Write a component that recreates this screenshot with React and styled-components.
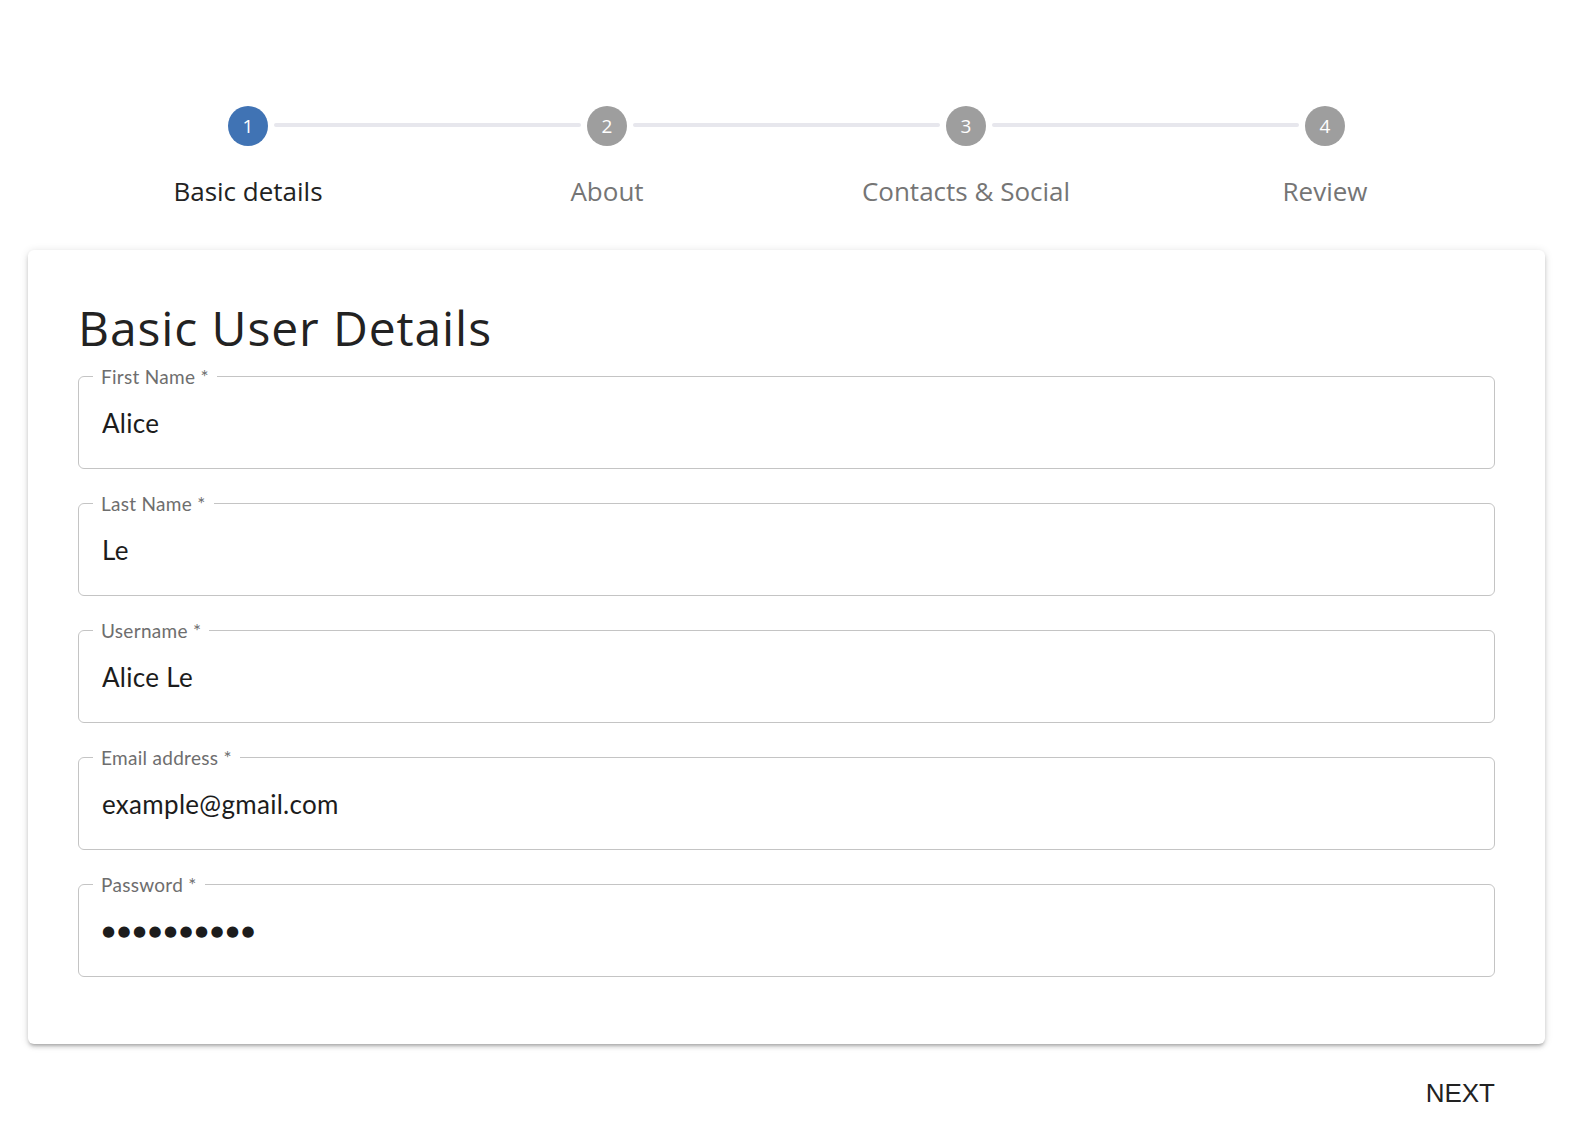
import React from "react";
import styled, { createGlobalStyle } from "styled-components";

const GlobalStyle = createGlobalStyle`
  html, body { margin: 0; padding: 0; background: #fff; }
  body { font-family: "Lato", "Open Sans", sans-serif; color: #222; }
  * { box-sizing: border-box; }
`;

const Page = styled.div`
  padding: 106px 35px 0 28px;
  display: flex;
  flex-direction: column;
`;

const Stepper = styled.div`
  margin: 0 40.5px;
  display: flex;
  flex-direction: column;
`;

const CircleRow = styled.div`
  display: flex;
  align-items: center;
  padding: 0 159.5px;
`;

const Circle = styled.div`
  flex: none;
  width: 40px;
  height: 40px;
  border-radius: 50%;
  background: ${(p) => (p.$active ? "#4073b4" : "#9e9e9e")};
  color: #fff;
  font-family: "Open Sans", sans-serif;
  font-size: 19px;
  display: flex;
  align-items: center;
  justify-content: center;
`;

const Connector = styled.div`
  flex: 1;
  height: 4px;
  margin: -3px 6px 0;
  background: #e7e7ed;
  border-radius: 2px;
`;

const LabelRow = styled.div`
  display: grid;
  grid-template-columns: repeat(4, 1fr);
  margin-top: 27px;
`;

const StepLabel = styled.div`
  text-align: center;
  font-family: "Open Sans", sans-serif;
  font-size: 26px;
  line-height: 36px;
  color: ${(p) => (p.$active ? "#222" : "#757575")};
`;

const Card = styled.div`
  margin-top: 41px;
  background: #fff;
  border-radius: 6px;
  padding: 49px 50px 67px;
  box-shadow: 0 3px 3px -2px rgba(0, 0, 0, 0.2), 0 3px 4px 0 rgba(0, 0, 0, 0.14),
    0 1px 8px 0 rgba(0, 0, 0, 0.12);
  display: flex;
  flex-direction: column;
`;

const Title = styled.h1`
  margin: 0 0 8px;
  font-family: "Open Sans", sans-serif;
  font-weight: 400;
  font-size: 48px;
  line-height: 58px;
  letter-spacing: 0.9px;
  color: #222;
`;

const Fields = styled.div`
  display: flex;
  flex-direction: column;
  gap: 23px;
`;

const Field = styled.fieldset`
  margin: 0;
  padding: 0 23px;
  border: 1px solid #c4c4c4;
  border-radius: 6px;
  min-width: 0;
`;

const Legend = styled.legend`
  margin-left: -9px;
  padding: 0 8px 0 8px;
  font-family: "Lato", sans-serif;
  font-size: 19px;
  line-height: 23px;
  letter-spacing: 0.3px;
  color: #6e6e6e;
`;

const Input = styled.input`
  display: block;
  width: 100%;
  border: none;
  outline: none;
  background: transparent;
  padding: 20px 0 30px;
  margin: 0;
  font-family: "Lato", sans-serif;
  font-size: 26px;
  line-height: 30px;
  letter-spacing: 0.3px;
  height: 80px;
  color: #1c1c1c;
`;

const Dots = styled.div`
  padding: 20px 0 30px;
  height: 80px;
  font-family: "DejaVu Sans", sans-serif;
  font-size: 15px;
  line-height: 30px;
  letter-spacing: 2.4px;
  color: #1c1c1c;
`;

const Actions = styled.div`
  display: flex;
  justify-content: flex-end;
  padding: 34px 50px 0 0;
`;

const NextButton = styled.button`
  border: none;
  background: transparent;
  padding: 0;
  font-family: "Liberation Sans", Arial, sans-serif;
  font-size: 26px;
  color: #222;
  cursor: pointer;
`;

const steps = ["Basic details", "About", "Contacts & Social", "Review"];

const fields = [
  { label: "First Name *", value: "Alice" },
  { label: "Last Name *", value: "Le" },
  { label: "Username *", value: "Alice Le" },
  { label: "Email address *", value: "example@gmail.com" },
];

export default function App() {
  return (
    <>
      <GlobalStyle />
      <Page>
        <Stepper>
          <CircleRow>
            {steps.map((s, i) => (
              <React.Fragment key={s}>
                {i > 0 && <Connector />}
                <Circle $active={i === 0}>{i + 1}</Circle>
              </React.Fragment>
            ))}
          </CircleRow>
          <LabelRow>
            {steps.map((s, i) => (
              <StepLabel key={s} $active={i === 0}>
                {s}
              </StepLabel>
            ))}
          </LabelRow>
        </Stepper>
        <Card>
          <Title>Basic User Details</Title>
          <Fields>
            {fields.map((f) => (
              <Field key={f.label}>
                <Legend>{f.label}</Legend>
                <Input readOnly value={f.value} />
              </Field>
            ))}
            <Field>
              <Legend>Password *</Legend>
              <Dots>{"●●●●●●●●●●"}</Dots>
            </Field>
          </Fields>
        </Card>
        <Actions>
          <NextButton>NEXT</NextButton>
        </Actions>
      </Page>
    </>
  );
}
